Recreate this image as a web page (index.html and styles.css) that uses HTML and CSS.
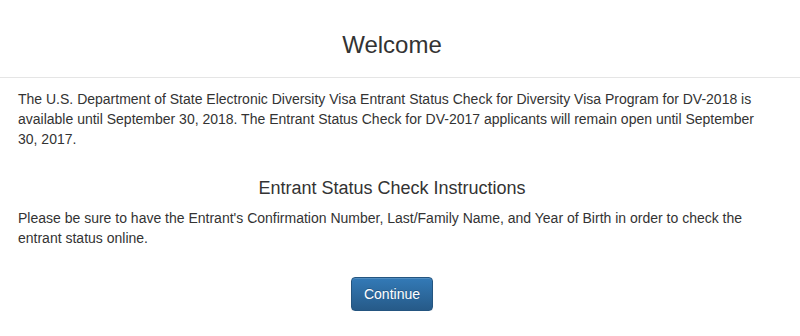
FILE: index.html
```html
<!DOCTYPE html>
<html lang="en">
<head>
  <meta charset="UTF-8" />
  <meta name="viewport" content="width=device-width, initial-scale=1.0"/>
  <title>Entrant Status Check</title>
  <link rel="stylesheet" href="styles.css">
</head>
<body>
  <div class="header">
    <h3 class="title">Welcome</h3>
  </div>
  <div class="content">
    <p>The U.S. Department of State Electronic Diversity Visa Entrant Status Check for Diversity Visa Program for DV-2018 is available until September 30, 2018. The Entrant Status Check for DV-2017 applicants will remain open until September 30, 2017.</p>
    <h4 class="subtitle">Entrant Status Check Instructions</h4>
    <p>Please be sure to have the Entrant's Confirmation Number, Last/Family Name, and Year of Birth in order to check the entrant status online.</p>
    <div class="actions">
      <button class="btn-primary" type="button">Continue</button>
    </div>
  </div>
</body>
</html>
```
FILE: styles.css
```css
body {
  margin: 0;
  font-family: "Liberation Sans", Arial, sans-serif;
  font-size: 14px;
  line-height: 20px;
  color: #333;
  background: #fff;
}
.header {
  padding: 32px 34px 19px 18px;
  border-bottom: 1px solid #e5e5e5;
}
.title {
  margin: 0;
  font-size: 24px;
  font-weight: normal;
  line-height: 26px;
  text-align: center;
}
.content {
  padding: 11px 34px 0 18px;
}
p { margin: 0; }
.subtitle {
  margin: 29px 0 10px;
  font-size: 18px;
  font-weight: normal;
  line-height: 20px;
  text-align: center;
}
.actions {
  margin-top: 29px;
  text-align: center;
}
.btn-primary {
  font-family: inherit;
  font-size: 14px;
  line-height: 20px;
  padding: 6px 12px;
  color: #fff;
  background: linear-gradient(to bottom, #337ab7 0, #265a88 100%);
  border: 1px solid #245580;
  border-radius: 4px;
  box-shadow: inset 0 1px 0 rgba(255,255,255,0.15), 0 1px 1px rgba(0,0,0,0.075);
  text-shadow: 0 -1px 0 rgba(0,0,0,0.2);
  cursor: pointer;
}
```
